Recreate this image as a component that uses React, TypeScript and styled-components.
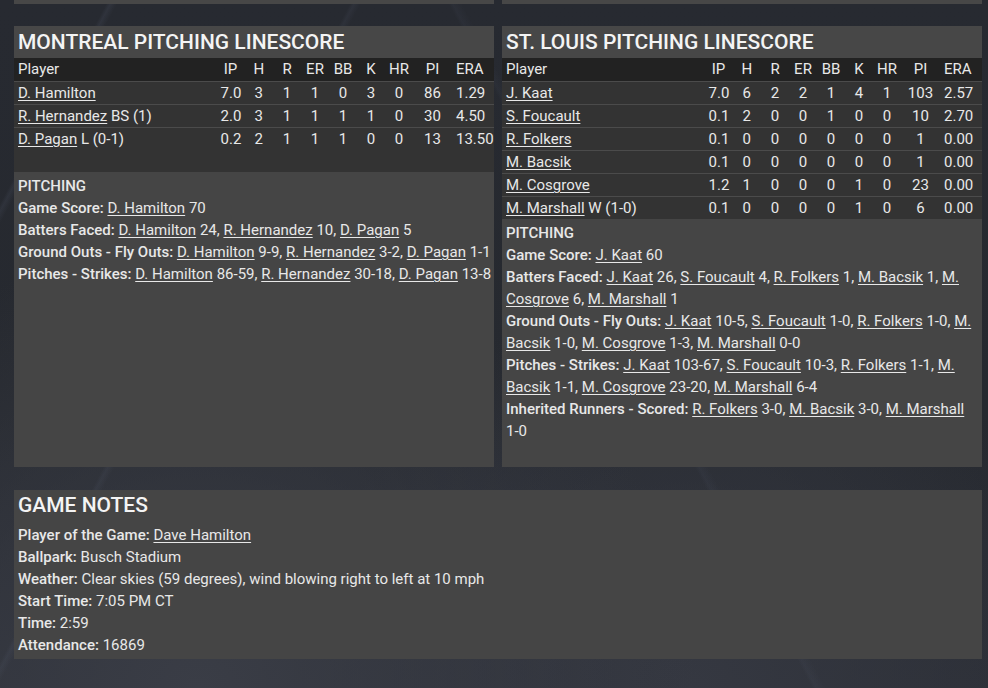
import React from 'react';
import styled, { createGlobalStyle } from 'styled-components';

const GlobalStyle = createGlobalStyle`
  html, body { margin: 0; padding: 0; }
  body {
    width: 988px;
    height: 688px;
    overflow: hidden;
    font-family: Roboto, "Noto Sans", "Liberation Sans", sans-serif;
    color: #e8e8e8;
    background:
      linear-gradient(118deg, transparent 0 8%, rgba(120,130,160,0.10) 8.3%, transparent 8.8% 100%),
      linear-gradient(118deg, transparent 0 26%, rgba(120,130,160,0.08) 26.3%, transparent 26.8% 100%),
      linear-gradient(62deg, transparent 0 60%, rgba(110,120,150,0.06) 60.3%, transparent 61% 100%),
      radial-gradient(ellipse at 20% 100%, #3a3d46 0%, transparent 45%),
      radial-gradient(ellipse at 70% 100%, #353841 0%, transparent 40%),
      linear-gradient(180deg, #272a31 0%, #26292f 60%, #2c2f37 100%);
  }
`;

const Page = styled.div`
  display: flex;
  flex-direction: column;
  padding: 0 6px 0 14px;
  width: 968px;
`;

const TopStub = styled.div`
  display: grid;
  grid-template-columns: 480px 480px;
  gap: 8px;
  height: 4px;
  margin-bottom: 22px;
  & > div { background: #474747; }
`;

const PanelGrid = styled.div`
  display: grid;
  grid-template-columns: 480px 480px;
  gap: 8px;
  align-items: stretch;
  margin-bottom: 23px;
`;

const Panel = styled.section`
  display: flex;
  flex-direction: column;
`;

const Title = styled.h2`
  margin: 0;
  padding: 0 4px;
  height: 32px;
  line-height: 32px;
  font-size: 21px;
  font-weight: 500;
  color: #f4f4f4;
  background: #474747;
  white-space: nowrap;
`;

const Row = styled.div<{ $head?: boolean; $spacer?: boolean }>`
  display: grid;
  grid-template-columns: 1fr 28px 28.5px 28px 28px 28px 28px 28px 39px 35px;
  padding: 0 7px 0 0;
  height: ${p => (p.$spacer ? '22px' : '23px')};
  box-sizing: border-box;
  line-height: 22px;
  font-size: 15px;
  background: ${p => (p.$head ? '#222222' : '#333333')};
  border-top: ${p => (p.$head || p.$spacer ? 'none' : '1px solid #4b4b4b')};
  ${p => (p.$head ? 'line-height: 23px;' : '')}
`;

const NameCell = styled.div`
  padding-left: 4px;
  white-space: nowrap;
  overflow: visible;
`;

const StatCell = styled.div`
  padding: 0 4px;
  text-align: center;
  white-space: nowrap;
`;

const Link = styled.a`
  color: inherit;
  text-decoration: underline;
  text-underline-offset: 2px;
  text-decoration-thickness: 1px;
`;

const Value = styled.span`
  white-space: nowrap;
`;

const NotesBox = styled.div`
  flex: 1;
  background: #454545;
  padding: 3px 0 25px 4px;
  font-size: 15px;
  line-height: 22px;
`;

const NotesHeading = styled.div`
  font-weight: 500;
`;

const Label = styled.span`
  font-weight: 500;
`;

const NoteLine = styled.div``;

const GameNotesPanel = styled.section`
  background: #454545;
  padding: 0 4px 3px 4px;
  font-size: 15px;
  line-height: 22px;
`;

const GameNotesTitle = styled.h2`
  margin: 0 0 2px 0;
  height: 32px;
  line-height: 30px;
  font-size: 21px;
  font-weight: 500;
  color: #f4f4f4;
`;

type PRow = { name: string; note?: string; stats: string[] };
type Note = { label: string; items: [string, string][] };
type Team = { title: string; rows: PRow[]; spacer?: boolean; notes: Note[] };

const HEAD = ['IP', 'H', 'R', 'ER', 'BB', 'K', 'HR', 'PI', 'ERA'];

const teams: Team[] = [
  {
    title: 'MONTREAL PITCHING LINESCORE',
    spacer: true,
    rows: [
      { name: 'D. Hamilton', stats: ['7.0', '3', '1', '1', '0', '3', '0', '86', '1.29'] },
      { name: 'R. Hernandez', note: 'BS (1)', stats: ['2.0', '3', '1', '1', '1', '1', '0', '30', '4.50'] },
      { name: 'D. Pagan', note: 'L (0-1)', stats: ['0.2', '2', '1', '1', '1', '0', '0', '13', '13.50'] },
    ],
    notes: [
      { label: 'Game Score', items: [['D. Hamilton', '70']] },
      { label: 'Batters Faced', items: [['D. Hamilton', '24'], ['R. Hernandez', '10'], ['D. Pagan', '5']] },
      { label: 'Ground Outs - Fly Outs', items: [['D. Hamilton', '9-9'], ['R. Hernandez', '3-2'], ['D. Pagan', '1-1']] },
      { label: 'Pitches - Strikes', items: [['D. Hamilton', '86-59'], ['R. Hernandez', '30-18'], ['D. Pagan', '13-8']] },
    ],
  },
  {
    title: 'ST. LOUIS PITCHING LINESCORE',
    rows: [
      { name: 'J. Kaat', stats: ['7.0', '6', '2', '2', '1', '4', '1', '103', '2.57'] },
      { name: 'S. Foucault', stats: ['0.1', '2', '0', '0', '1', '0', '0', '10', '2.70'] },
      { name: 'R. Folkers', stats: ['0.1', '0', '0', '0', '0', '0', '0', '1', '0.00'] },
      { name: 'M. Bacsik', stats: ['0.1', '0', '0', '0', '0', '0', '0', '1', '0.00'] },
      { name: 'M. Cosgrove', stats: ['1.2', '1', '0', '0', '0', '1', '0', '23', '0.00'] },
      { name: 'M. Marshall', note: 'W (1-0)', stats: ['0.1', '0', '0', '0', '0', '1', '0', '6', '0.00'] },
    ],
    notes: [
      { label: 'Game Score', items: [['J. Kaat', '60']] },
      {
        label: 'Batters Faced',
        items: [['J. Kaat', '26'], ['S. Foucault', '4'], ['R. Folkers', '1'], ['M. Bacsik', '1'], ['M. Cosgrove', '6'], ['M. Marshall', '1']],
      },
      {
        label: 'Ground Outs - Fly Outs',
        items: [['J. Kaat', '10-5'], ['S. Foucault', '1-0'], ['R. Folkers', '1-0'], ['M. Bacsik', '1-0'], ['M. Cosgrove', '1-3'], ['M. Marshall', '0-0']],
      },
      {
        label: 'Pitches - Strikes',
        items: [['J. Kaat', '103-67'], ['S. Foucault', '10-3'], ['R. Folkers', '1-1'], ['M. Bacsik', '1-1'], ['M. Cosgrove', '23-20'], ['M. Marshall', '6-4']],
      },
      { label: 'Inherited Runners - Scored', items: [['R. Folkers', '3-0'], ['M. Bacsik', '3-0'], ['M. Marshall', '1-0']] },
    ],
  },
];

const gameNotes: { label: string; value: string; link?: boolean }[] = [
  { label: 'Player of the Game', value: 'Dave Hamilton', link: true },
  { label: 'Ballpark', value: 'Busch Stadium' },
  { label: 'Weather', value: 'Clear skies (59 degrees), wind blowing right to left at 10 mph' },
  { label: 'Start Time', value: '7:05 PM CT' },
  { label: 'Time', value: '2:59' },
  { label: 'Attendance', value: '16869' },
];

const TeamPanel: React.FC<{ team: Team }> = ({ team }) => (
  <Panel>
    <Title>{team.title}</Title>
    <Row $head>
      <NameCell>Player</NameCell>
      {HEAD.map(h => (
        <StatCell key={h}>{h}</StatCell>
      ))}
    </Row>
    {team.rows.map(r => (
      <Row key={r.name}>
        <NameCell>
          <Link href="#">{r.name}</Link>
          {r.note ? ` ${r.note}` : ''}
        </NameCell>
        {r.stats.map((s, i) => (
          <StatCell key={i}>{s}</StatCell>
        ))}
      </Row>
    ))}
    {team.spacer && <Row $spacer />}
    <NotesBox>
      <NotesHeading>PITCHING</NotesHeading>
      {team.notes.map(n => (
        <NoteLine key={n.label}>
          <Label>{n.label}:</Label>{' '}
          {n.items.map(([name, val], i) => (
            <React.Fragment key={name}>
              <Link href="#">{name}</Link>{' '}
              <Value>
                {val}
                {i < n.items.length - 1 ? ',' : ''}
              </Value>
              {i < n.items.length - 1 ? ' ' : ''}
            </React.Fragment>
          ))}
        </NoteLine>
      ))}
    </NotesBox>
  </Panel>
);

export default function App() {
  return (
    <>
      <GlobalStyle />
      <Page>
        <TopStub>
          <div />
          <div />
        </TopStub>
        <PanelGrid>
          {teams.map(t => (
            <TeamPanel key={t.title} team={t} />
          ))}
        </PanelGrid>
        <GameNotesPanel>
          <GameNotesTitle>GAME NOTES</GameNotesTitle>
          {gameNotes.map(g => (
            <NoteLine key={g.label}>
              <Label>{g.label}:</Label>{' '}
              {g.link ? <Link href="#">{g.value}</Link> : g.value}
            </NoteLine>
          ))}
        </GameNotesPanel>
      </Page>
    </>
  );
}
